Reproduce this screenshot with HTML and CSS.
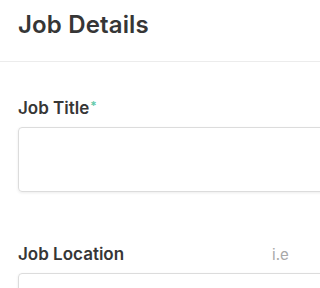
FILE: index.html
```html
<!DOCTYPE html>
<html>
<head>
<meta charset="utf-8">
<link rel="stylesheet" href="styles.css">
</head>
<body>
<div class="page">
  <div class="inner">
    <header class="head">
      <h1 class="title">Job Details</h1>
    </header>
    <section class="form">
      <div class="field">
        <div class="label-row">
          <label class="label">Job Title<span class="req">*</span></label>
        </div>
        <div class="input tall"></div>
      </div>
      <div class="field">
        <div class="label-row">
          <label class="label">Job Location</label>
          <span class="hint">i.e</span>
        </div>
        <div class="input"></div>
      </div>
    </section>
  </div>
</div>
</body>
</html>
```
FILE: styles.css
```css
html, body {
  margin: 0;
  padding: 0;
  background: #fff;
  overflow: hidden;
}
.page {
  width: 100%;
  height: 288px;
  overflow: hidden;
  font-family: Inter, "Noto Sans", sans-serif;
  color: #363636;
}
.inner {
  width: 700px;
}
.head {
  padding: 9px 18px 20px;
  border-bottom: 1px solid #ececec;
}
.title {
  margin: 0;
  font-size: 24px;
  line-height: 32px;
  font-weight: 600;
  letter-spacing: 0.15px;
}
.form {
  padding: 34px 0 0 18px;
}
.field {
  margin-bottom: 50px;
}
.label-row {
  display: grid;
  grid-template-columns: 254px auto;
  align-items: baseline;
  height: 24px;
  margin-bottom: 7px;
}
.label {
  font-size: 17px;
  line-height: 24px;
  font-weight: 600;
  color: #363636;
}
.req {
  color: #5fc9a9;
  font-size: 12px;
  vertical-align: top;
  position: relative;
  top: -2px;
  margin-left: 1px;
}
.hint {
  font-size: 15px;
  color: #a8a8a8;
  white-space: nowrap;
}
.input {
  height: 40px;
  border: 1px solid #dcdcdc;
  border-radius: 4px;
  box-shadow: 0 1px 3px rgba(0, 0, 0, 0.08);
}
.input.tall {
  height: 63px;
}
```
